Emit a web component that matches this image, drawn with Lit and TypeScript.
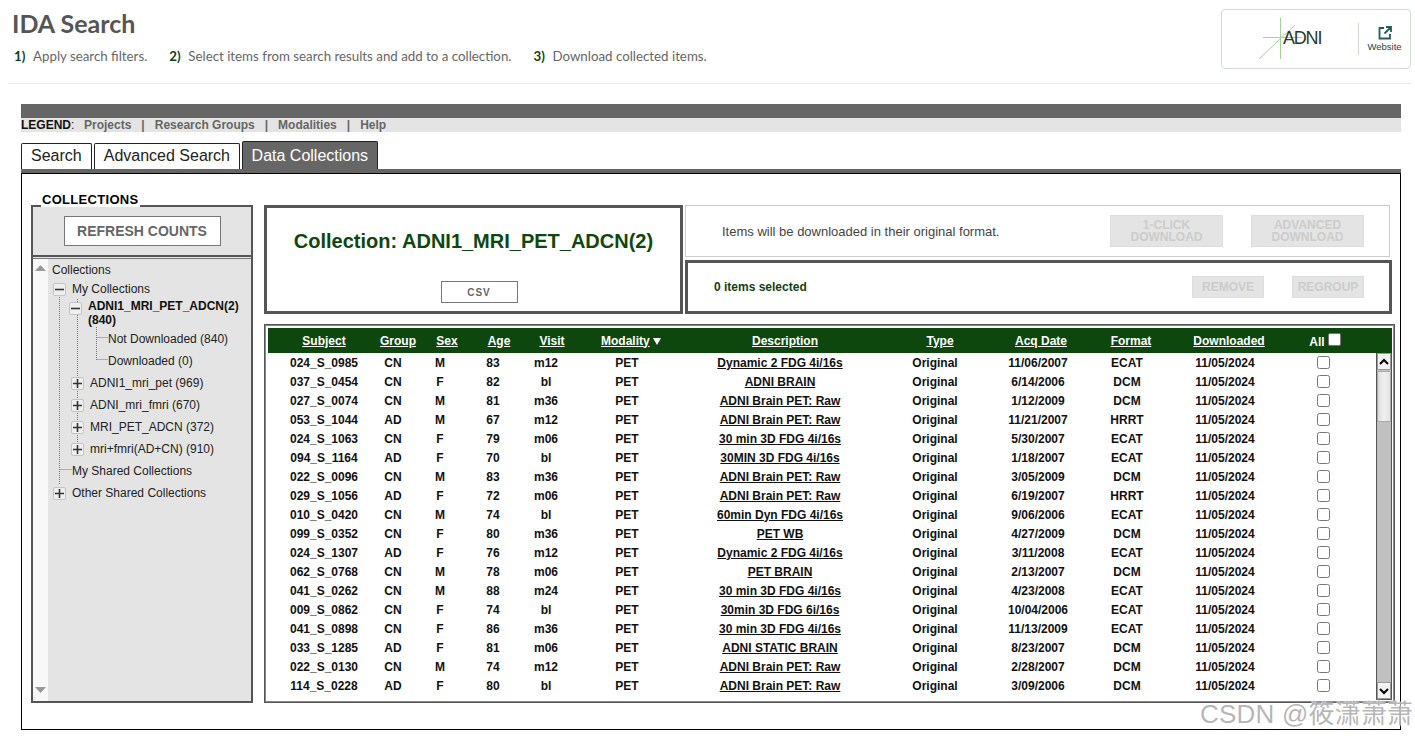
import { LitElement, html, css, svg } from "lit";
import { customElement } from "lit/decorators.js";

const ROWS: string[][] = [
  ["024_S_0985","CN","M","83","m12","Dynamic 2 FDG 4i/16s","11/06/2007","ECAT"],
  ["037_S_0454","CN","F","82","bl","ADNI BRAIN","6/14/2006","DCM"],
  ["027_S_0074","CN","M","81","m36","ADNI Brain PET: Raw","1/12/2009","DCM"],
  ["053_S_1044","AD","M","67","m12","ADNI Brain PET: Raw","11/21/2007","HRRT"],
  ["024_S_1063","CN","F","79","m06","30 min 3D FDG 4i/16s","5/30/2007","ECAT"],
  ["094_S_1164","AD","F","70","bl","30MIN 3D FDG 4i/16s","1/18/2007","ECAT"],
  ["022_S_0096","CN","M","83","m36","ADNI Brain PET: Raw","3/05/2009","DCM"],
  ["029_S_1056","AD","F","72","m06","ADNI Brain PET: Raw","6/19/2007","HRRT"],
  ["010_S_0420","CN","M","74","bl","60min Dyn FDG 4i/16s","9/06/2006","ECAT"],
  ["099_S_0352","CN","F","80","m36","PET WB","4/27/2009","DCM"],
  ["024_S_1307","AD","F","76","m12","Dynamic 2 FDG 4i/16s","3/11/2008","ECAT"],
  ["062_S_0768","CN","M","78","m06","PET BRAIN","2/13/2007","DCM"],
  ["041_S_0262","CN","M","88","m24","30 min 3D FDG 4i/16s","4/23/2008","ECAT"],
  ["009_S_0862","CN","F","74","bl","30min 3D FDG 6i/16s","10/04/2006","ECAT"],
  ["041_S_0898","CN","F","86","m36","30 min 3D FDG 4i/16s","11/13/2009","ECAT"],
  ["033_S_1285","AD","F","81","m06","ADNI STATIC BRAIN","8/23/2007","DCM"],
  ["022_S_0130","CN","M","74","m12","ADNI Brain PET: Raw","2/28/2007","DCM"],
  ["114_S_0228","AD","F","80","bl","ADNI Brain PET: Raw","3/09/2006","DCM"],
];

const HEAD = ["Subject","Group","Sex","Age","Visit"];
const HEAD2 = ["Description","Type","Acq Date","Format","Downloaded"];

type Node = { label: string; left: number; icon?: "+" | "-"; cls: string; bold?: boolean };
const TREE: Node[] = [
  { label: "Collections", left: 4, cls: "h-a" },
  { label: "My Collections", left: 24, icon: "-", cls: "h-b" },
  { label: "ADNI1_MRI_PET_ADCN(2) (840)", left: 40, icon: "-", cls: "h-c", bold: true },
  { label: "Not Downloaded (840)", left: 60, cls: "h-d" },
  { label: "Downloaded (0)", left: 60, cls: "h-d" },
  { label: "ADNI1_mri_pet (969)", left: 42, icon: "+", cls: "h-d" },
  { label: "ADNI_mri_fmri (670)", left: 42, icon: "+", cls: "h-d" },
  { label: "MRI_PET_ADCN (372)", left: 42, icon: "+", cls: "h-d" },
  { label: "mri+fmri(AD+CN) (910)", left: 42, icon: "+", cls: "h-d" },
  { label: "My Shared Collections", left: 24, cls: "h-d" },
  { label: "Other Shared Collections", left: 24, icon: "+", cls: "h-d" },
];

@customElement("tree-view")
class TreeView extends LitElement {
  static styles = css`
    :host { display: block; position: relative; flex: 1; min-width: 0; overflow: hidden; background: #e4e4e4; font: 12px "Liberation Sans", Arial, sans-serif; color: #222; }
    .guides { position: absolute; left: 0; top: 0; pointer-events: none; }
    .row { position: relative; display: flex; align-items: center; }
    .h-a { height: 21px; }
    .h-b { height: 17px; }
    .h-c { height: 31px; }
    .h-d { height: 22px; }
    .lab { position: relative; line-height: 14px; }
    .lab.b { font-weight: 700; width: 170px; color: #111; }
    .box { position: absolute; width: 11px; height: 11px; border: 1px solid #c4c4c4; border-radius: 2px; background: #efefef; top: 50%; margin-top: -6px; display: flex; align-items: center; justify-content: center; }
    .h-c .box { top: 5px; margin-top: 0; }
    .box svg { display: block; }
  `;
  render() {
    return html`
      <svg class="guides" width="170" height="260" fill="none" stroke="#777" stroke-width="1" stroke-dasharray="1 1">
        ${svg`<path d="M11.5 24V226M11.5 210.5H24M29.5 40V188M48.5 68V101M48.5 78.5H60M48.5 100.5H60"/>`}
      </svg>
      ${TREE.map((n) => html`
        <div class="row ${n.cls}" style="padding-left:${n.left}px">
          ${n.icon ? html`<span class="box" style="left:${n.left - 19}px">
            <svg width="9" height="9" viewBox="0 0 9 9"><path d="${n.icon === "+" ? "M0 4.5H9M4.5 0V9" : "M0 4.5H9"}" stroke="#333" stroke-width="1.6"/></svg>
          </span>` : ""}
          <span class="lab ${n.bold ? "b" : ""}">${n.label}</span>
        </div>`)}
    `;
  }
}

@customElement("app-root")
class AppRoot extends LitElement {
  static styles = css`
    :host { display: block; position: relative; width: 1415px; height: 740px; overflow: hidden; background: #fff; font-family: "Liberation Sans", Arial, sans-serif; }
    .top { display: flex; justify-content: space-between; height: 83px; margin: 0 4px 0 8px; padding-left: 4px; border-bottom: 1px solid #e8e8e8; }
    .title { margin: 0; height: 39px; padding-top: 5px; font: 700 25px/36px Lato, sans-serif; color: #555; }
    .steps { display: flex; margin: 3px 0 0 2px; font: 13.3px/18px Lato, sans-serif; color: #666; }
    .steps b { color: #143f14; width: 19px; }
    .steps span { margin-right: 22px; }
    .logo { display: flex; align-items: center; box-sizing: border-box; width: 190px; height: 60px; margin-top: 9px; border: 1px solid #cfdccf; border-radius: 4px; }
    .mark { position: relative; width: 136px; height: 58px; }
    .mark svg { position: absolute; left: 0; top: 0; }
    .mark span { position: absolute; left: 61px; top: 18px; font: 18px/20px "Liberation Sans", sans-serif; letter-spacing: -1.2px; color: #2a3a2a; }
    .site { box-sizing: border-box; display: flex; flex-direction: column; align-items: center; height: 32px; width: 52px; padding-top: 3px; border-left: 1px solid #cfdccf; font: 9.5px/11px "Liberation Sans", sans-serif; color: #24434c; }
    .site svg { margin-bottom: 1px; flex: none; }
    .main { width: 1380px; margin: 20px 0 0 21px; }
    .bar { height: 14px; background: #666; }
    .legend { display: flex; height: 14px; background: #e4e4e4; font: 700 12px/14px "Liberation Sans", sans-serif; color: #666; white-space: pre; }
    .legend .l { width: 63px; color: #222; font-weight: 400; }
    .legend .l b { color: #111; }
    .tabs { display: flex; align-items: flex-end; gap: 2px; height: 37px; }
    .tab { box-sizing: border-box; height: 26px; padding: 0 9px; border: 1px solid #222; border-bottom: 0; border-radius: 2px 2px 0 0; font: 16px/24px "Liberation Sans", sans-serif; color: #222; background: #fff; }
    .tab:nth-child(2) { padding-right: 8.6px; }
    .tab.on { height: 28px; background: #666; color: #fff; line-height: 28px; }
    .rule { height: 4px; background: #666; }
    .content { box-sizing: border-box; height: 557px; display: flex; gap: 11px; padding: 31px 5px 0 9px; border: 1px solid #000; }
    fieldset { box-sizing: border-box; width: 222px; height: 498px; margin: 0; padding: 0; border: 2px solid #555; display: flex; flex-direction: column; min-width: 0; }
    legend { height: 0; margin-left: 8px; padding: 0; }
    legend span { display: block; margin-top: -14px; padding: 0 2px 0 1px; background: #fff; font: 700 13px/15px "Liberation Sans", sans-serif; letter-spacing: 0.3px; color: #000; }
    .refresh { display: flex; justify-content: center; align-items: center; height: 48px; background: #e4e4e4; flex: none; }
    .btn { box-sizing: border-box; display: flex; align-items: center; justify-content: center; text-align: center; font-weight: 700; }
    .refresh .btn { width: 157px; height: 30px; margin-top: 0; background: #fff; border: 1px solid #777; color: #666; font-size: 14px; }
    .sep { flex: none; box-sizing: border-box; height: 4px; background: #e4e4e4; border-top: 2px solid #555; border-bottom: 1px solid #777; }
    .treewrap { flex: 1; display: flex; min-height: 0; }
    .vs { width: 15px; flex: none; background: #f8f8f8; display: flex; flex-direction: column; justify-content: space-between; align-items: center; padding: 6px 0 8px; box-sizing: border-box; }
    .right { width: 1131px; display: flex; flex-direction: column; gap: 10px; }
    .upper { display: flex; gap: 2px; height: 109px; }
    .coll { box-sizing: border-box; width: 419px; height: 109px; border: 3px solid #555; display: flex; flex-direction: column; align-items: center; }
    .coll h2 { margin: 21px 0 0; font: 700 20px/24px "Liberation Sans", sans-serif; color: #0e470e; }
    .csv { width: 77px; height: 22px; margin: 28px 0 0 11px; border: 1px solid #777; font-size: 10px; color: #666; letter-spacing: 1px; }
    .stack { display: flex; flex-direction: column; gap: 3px; width: 707px; }
    .dl { box-sizing: border-box; width: 705px; height: 52px; border: 1px solid #ccc; display: flex; align-items: center; padding-left: 36px; font-size: 13px; color: #444; }
    .sel { box-sizing: border-box; height: 54px; border: 3px solid #555; display: flex; align-items: center; padding-left: 26px; font-size: 12px; font-weight: 700; color: #143f14; }
    .grow { flex: 1; }
    .off { box-sizing: border-box; background: #e4e4e4; border: 1px solid #ddd; color: #ccc; font-size: 12px; line-height: 12px; }
    .dl .off { width: 113px; height: 32px; margin-left: 28px; }
    .dl .grow + .off { margin-left: 0; }
    .dl .off:last-child { margin-right: 25px; }
    .sel .off { width: 72px; height: 22px; margin-left: 28px; }
    .sel .grow + .off { margin-left: 0; }
    .sel .off:last-child { margin-right: 25px; }
    .table { box-sizing: border-box; width: 1131px; height: 379px; border: 1px solid #555; outline: 1px solid #888; outline-offset: -2px; padding: 3px 2px 0 3px; display: flex; flex-direction: column; }
    .thead, .tr { display: grid; align-items: center; text-align: center; font-size: 12px; font-weight: 700; }
    .thead { flex: none; height: 25px; background: #0e470e; color: #fff; grid-template-columns: 112px 34px 66px 38px 68px 90px 218px 92px 110px 70px 126px 66px; }
    .thead u { text-underline-offset: 1px; }
    .all { display: flex; align-items: center; justify-content: center; gap: 3px; padding-top: 3px; }
    .all i { display: block; box-sizing: border-box; width: 13px; height: 13px; background: #fff; border: 1px solid #777; border-radius: 2px; margin-top: -6px; }
    .body { flex: 1; display: flex; min-height: 0; }
    .rows { width: 1108px; overflow: hidden; }
    .tr { height: 19px; color: #111; grid-template-columns: 112px 26px 68px 38px 68px 94px 212px 98px 108px 70px 126px 70px; }
    .tr a { color: #111; text-decoration: underline; text-underline-offset: 1px; }
    .cb { display: block; box-sizing: border-box; width: 13px; height: 13px; margin: auto; border: 1px solid #777; border-radius: 2.5px; background: #fff; }
    .sb { box-sizing: border-box; width: 16px; flex: none; display: flex; flex-direction: column; background: #c0c0c0; border: 1px solid #555; border-top: 0; height: 347px; }
    .sb .arr { flex: none; height: 17px; background: #f2f2f2; border: 1px solid #9a9a9a; box-sizing: border-box; display: flex; align-items: center; justify-content: center; }
    .sb .thumb { flex: none; height: 51px; margin-top: 1px; background: linear-gradient(90deg, #dcdcdc, #f0f0f0 50%, #e2e2e2); border: 1px solid #aaa; box-sizing: border-box; }
    .wm { position: absolute; left: 1200px; top: 698px; font: 26px/32px "Liberation Sans", "Noto Sans CJK SC", sans-serif; color: rgba(150,150,150,.7); text-shadow: 0 0 2px #fff, 0 0 2px #fff; white-space: nowrap; letter-spacing: 0.2px; pointer-events: none; }
  `;

  render() {
    const up = svg`<path d="M1 6L5 2L9 6" stroke="#000" stroke-width="2" fill="none"/>`;
    const down = svg`<path d="M1 2L5 6L9 2" stroke="#000" stroke-width="2" fill="none"/>`;
    return html`
      <div class="top">
        <div>
          <h1 class="title">IDA Search</h1>
          <div class="steps">
            <b>1)</b><span>Apply search filters.</span>
            <b>2)</b><span>Select items from search results and add to a collection.</span>
            <b>3)</b><span>Download collected items.</span>
          </div>
        </div>
        <div class="logo">
          <div class="mark">
            <svg width="136" height="58" fill="none" stroke="#a5d29a" stroke-width="1">
              <path d="M58.5 8V49M41 27.5H80M37 49L73 15"/>
            </svg>
            <span>ADNI</span>
          </div>
          <div class="site">
            <svg width="14" height="14" viewBox="0 0 14 14" fill="none" stroke="#1d6058" stroke-width="1.8">
              <path d="M6 2H1.5V12.5H12V8M8 1H13V6M13 1L6.5 7.5"/>
            </svg>
            Website
          </div>
        </div>
      </div>
      <div class="main">
        <div class="bar"></div>
        <div class="legend"><span class="l"><b>LEGEND</b>:</span>Projects   |   Research Groups   |   Modalities   |   Help</div>
        <div class="tabs">
          <div class="tab">Search</div>
          <div class="tab">Advanced Search</div>
          <div class="tab on">Data Collections</div>
        </div>
        <div class="rule"></div>
        <div class="content">
          <fieldset>
            <legend><span>COLLECTIONS</span></legend>
            <div class="refresh"><div class="btn">REFRESH COUNTS</div></div>
            <div class="sep"></div>
            <div class="treewrap">
              <div class="vs">
                <svg width="11" height="6"><path d="M0 6L5.5 0L11 6Z" fill="#999"/></svg>
                <svg width="11" height="6"><path d="M0 0L5.5 6L11 0Z" fill="#999"/></svg>
              </div>
              <tree-view></tree-view>
            </div>
          </fieldset>
          <div class="right">
            <div class="upper">
              <div class="coll">
                <h2>Collection: ADNI1_MRI_PET_ADCN(2)</h2>
                <div class="btn csv">CSV</div>
              </div>
              <div class="stack">
                <div class="dl">Items will be downloaded in their original format.<span class="grow"></span>
                  <div class="btn off">1-CLICK DOWNLOAD</div><div class="btn off">ADVANCED DOWNLOAD</div></div>
                <div class="sel">0 items selected<span class="grow"></span>
                  <div class="btn off">REMOVE</div><div class="btn off">REGROUP</div></div>
              </div>
            </div>
            <div class="table">
              <div class="thead">
                ${HEAD.map((h) => html`<u>${h}</u>`)}
                <span><u>Modality</u> <svg width="8" height="7"><path d="M0 0H8L4 7Z" fill="#fff"/></svg></span>
                ${HEAD2.map((h) => html`<u>${h}</u>`)}
                <span class="all">All<i></i></span>
              </div>
              <div class="body">
                <div class="rows">
                  ${ROWS.map((r) => html`<div class="tr">
                    <span>${r[0]}</span><span>${r[1]}</span><span>${r[2]}</span><span>${r[3]}</span><span>${r[4]}</span>
                    <span>PET</span><a>${r[5]}</a><span>Original</span><span>${r[6]}</span><span>${r[7]}</span>
                    <span>11/05/2024</span><i class="cb"></i>
                  </div>`)}
                </div>
                <div class="sb">
                  <div class="arr"><svg width="10" height="8">${up}</svg></div>
                  <div class="thumb"></div>
                  <div class="grow"></div>
                  <div class="arr"><svg width="10" height="8">${down}</svg></div>
                </div>
              </div>
            </div>
          </div>
        </div>
      </div>
      <div class="wm">CSDN @筱潇萧萧</div>
    `;
  }
}
